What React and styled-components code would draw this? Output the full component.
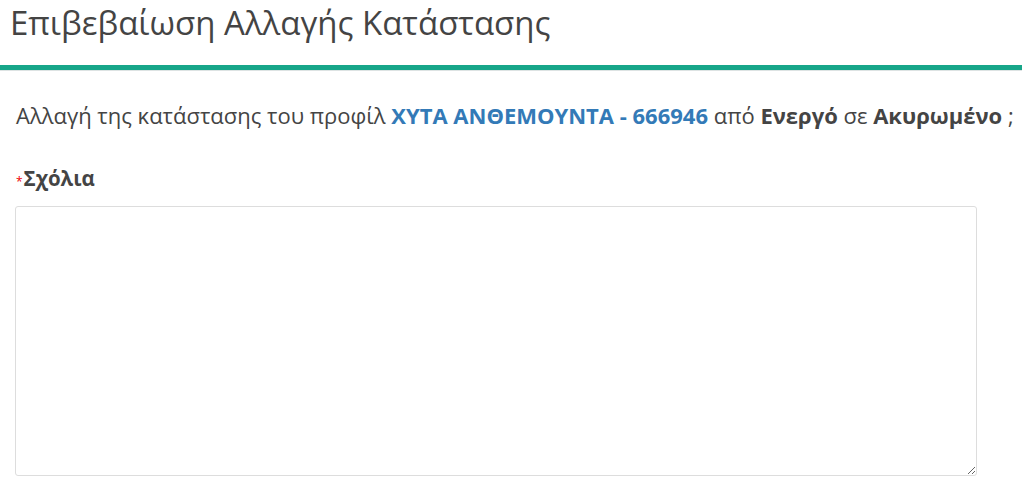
import React from "react";
import styled, { createGlobalStyle } from "styled-components";

const Global = createGlobalStyle`
  html, body { margin: 0; padding: 0; background: #fff; }
  body { font-family: "Open Sans", "Noto Sans", sans-serif; color: #444; }
`;

const Page = styled.div`
  width: 1022px;
  overflow: hidden;
`;

const Header = styled.header`
  padding: 3px 10px 0 10px;
  height: 70px;
  box-sizing: border-box;
  border-bottom: 5px solid #17a689;
  box-shadow: 0 1px 0 #dde3e3;
`;

const Title = styled.h1`
  margin: 0;
  font-size: 33px;
  font-weight: 400;
  color: #444;
  line-height: 40px;
  white-space: nowrap;
`;

const Body = styled.div`
  padding: 30px 0 0 16px;
`;

const Message = styled.p`
  margin: 0;
  font-size: 22px;
  line-height: 30px;
  white-space: nowrap;
  color: #444;
`;

const Highlight = styled.strong`
  font-weight: 700;
  color: ${(p) => (p.$accent ? "#337ab7" : "#444")};
`;

const Label = styled.label`
  display: flex;
  align-items: baseline;
  margin-top: 34px;
  font-size: 20.5px;
  font-weight: 700;
  color: #444;
  line-height: 28px;
`;

const Required = styled.span`
  color: #e00;
  font-size: 12px;
  font-weight: 400;
  margin-right: 1px;
`;

const Comments = styled.textarea`
  display: block;
  box-sizing: border-box;
  margin: 10px 0 0 -1px;
  width: 962px;
  height: 270px;
  border: 1px solid #ddd;
  border-radius: 3px;
  outline: none;
  padding: 4px 1px;
  font-family: inherit;
  font-size: 18px;
  color: #444;
  caret-color: #333;
  resize: vertical;
`;

export default function App() {
  return (
    <Page>
      <Global />
      <Header>
        <Title>Επιβεβαίωση Αλλαγής Κατάστασης</Title>
      </Header>
      <Body>
        <Message>
          Αλλαγή της κατάστασης του προφίλ{" "}
          <Highlight $accent>ΧΥΤΑ ΑΝΘΕΜΟΥΝΤΑ - 666946</Highlight> από{" "}
          <Highlight>Ενεργό</Highlight> σε <Highlight>Ακυρωμένο</Highlight> ;
        </Message>
        <Label>
          <Required>*</Required>Σχόλια
        </Label>
        <Comments autoFocus />
      </Body>
    </Page>
  );
}
